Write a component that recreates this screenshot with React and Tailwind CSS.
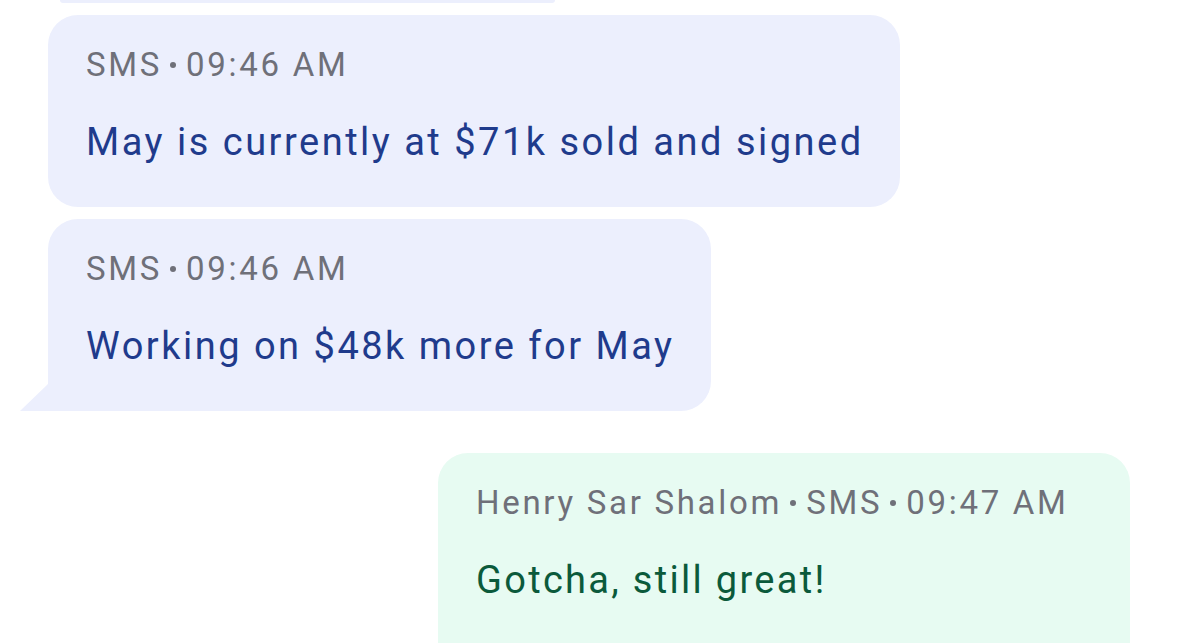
import React from 'react';

const MESSAGES = [
  { id: 1, meta: ['SMS', '09:46 AM'], text: 'May is currently at $71k sold and signed', out: false },
  { id: 2, meta: ['SMS', '09:46 AM'], text: 'Working on $48k more for May', out: false, tail: true },
];

function Meta({ parts }) {
  return (
    <div className="flex items-center text-[33px] leading-none text-[#6f7079] tracking-[2.7px]">
      {parts.map((p, i) => (
        <React.Fragment key={i}>
          {i > 0 && <span className="ml-[8px] mr-[10px] w-[6px] h-[6px] rounded-full bg-[#6f7079]" />}
          <span>{p}</span>
        </React.Fragment>
      ))}
    </div>
  );
}

function Incoming({ msg }) {
  return (
    <div className="relative self-start ml-[48px]">
      <div
        className={`bg-[#eceffd] rounded-[30px] pl-[38px] pr-[36px] pt-[33px] pb-[46px] ${
          msg.tail ? 'rounded-bl-none' : ''
        }`}
      >
        <Meta parts={msg.meta} />
        <div className="mt-[42px] text-[38px] leading-none tracking-[2.5px] text-[#1f3b8c]">{msg.text}</div>
      </div>
      {msg.tail && (
        <svg className="absolute left-[-28px] bottom-0" width="29" height="28" viewBox="0 0 29 28">
          <path d="M29 0 L29 28 L0 28 Z" fill="#eceffd" />
        </svg>
      )}
    </div>
  );
}

export default function App() {
  return (
    <div className="w-[1179px] h-[643px] overflow-hidden bg-white flex flex-col font-['Roboto',sans-serif]">
      <div className="ml-[60px] w-[495px] h-[3px] bg-[#eceffd] rounded-b-[30px] shrink-0" />
      <div className="flex flex-col gap-[12px] mt-[12px]">
        {MESSAGES.map((m) => (
          <Incoming key={m.id} msg={m} />
        ))}
      </div>
      <div className="self-end mr-[49px] mt-[42px] w-[692px] bg-[#e7fbf2] rounded-t-[30px] px-[38px] pt-[33px] h-[260px] shrink-0">
        <Meta parts={['Henry Sar Shalom', 'SMS', '09:47 AM']} />
        <div className="mt-[42px] text-[38px] leading-none tracking-[2.3px] text-[#0b5a3b]">Gotcha, still great!</div>
      </div>
    </div>
  );
}
